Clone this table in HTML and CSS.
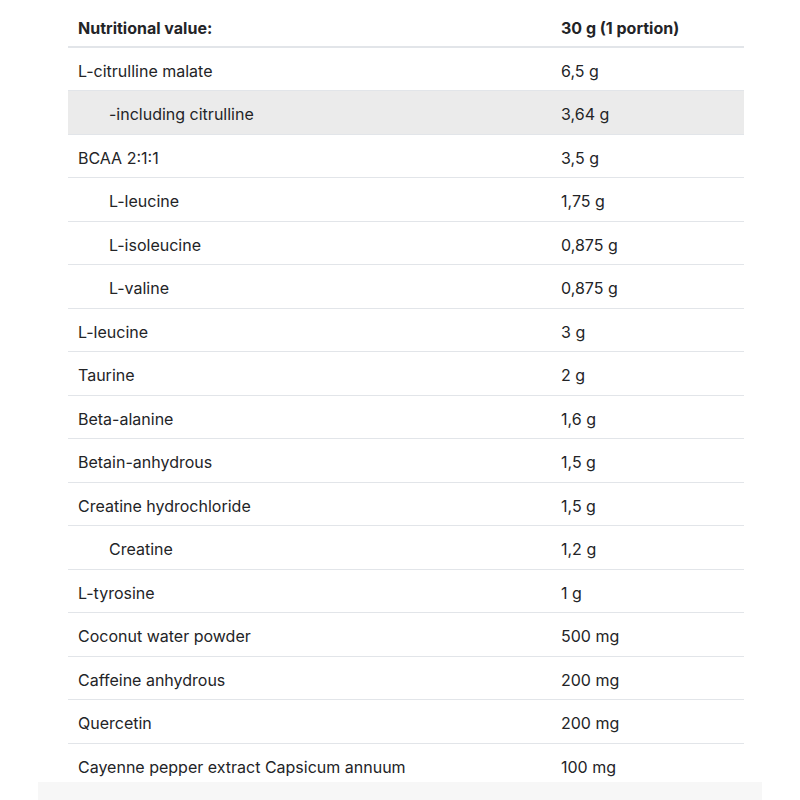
FILE: index.html
```html
<!DOCTYPE html>
<html>
<head>
<meta charset="utf-8">
<link rel="stylesheet" href="styles.css">
</head>
<body>
<div class="page">
  <table class="nutri">
    <colgroup><col class="c1"><col class="c2"></colgroup>
    <thead>
      <tr><th>Nutritional value:</th><th>30 g (1 portion)</th></tr>
    </thead>
    <tbody>
      <tr><td>L-citrulline malate</td><td>6,5 g</td></tr>
      <tr class="hl"><td class="sub">-including citrulline</td><td>3,64 g</td></tr>
      <tr><td>BCAA 2:1:1</td><td>3,5 g</td></tr>
      <tr><td class="sub">L-leucine</td><td>1,75 g</td></tr>
      <tr><td class="sub">L-isoleucine</td><td>0,875 g</td></tr>
      <tr><td class="sub">L-valine</td><td>0,875 g</td></tr>
      <tr><td>L-leucine</td><td>3 g</td></tr>
      <tr><td>Taurine</td><td>2 g</td></tr>
      <tr><td>Beta-alanine</td><td>1,6 g</td></tr>
      <tr><td>Betain-anhydrous</td><td>1,5 g</td></tr>
      <tr><td>Creatine hydrochloride</td><td>1,5 g</td></tr>
      <tr><td class="sub">Creatine</td><td>1,2 g</td></tr>
      <tr><td>L-tyrosine</td><td>1 g</td></tr>
      <tr><td>Coconut water powder</td><td>500 mg</td></tr>
      <tr><td>Caffeine anhydrous</td><td>200 mg</td></tr>
      <tr><td>Quercetin</td><td>200 mg</td></tr>
      <tr class="last"><td>Cayenne pepper extract Capsicum annuum</td><td>100 mg</td></tr>
    </tbody>
  </table>
  <div class="band"></div>
</div>
</body>
</html>
```

FILE: styles.css
```css
html, body {
  margin: 0;
  padding: 0;
  background: #ffffff;
}
.page {
  width: 800px;
  height: 800px;
  overflow: hidden;
  padding-top: 4px;
  box-sizing: border-box;
  font-family: "Inter", "Liberation Sans", sans-serif;
  color: #232427;
}
.nutri {
  margin-left: 68px;
  width: 676px;
  border-collapse: collapse;
  table-layout: fixed;
  font-size: 16px;
}
.nutri col.c1 {
  width: 483px;
}
.nutri col.c2 {
  width: 193px;
}
.nutri th, .nutri td {
  text-align: left;
  padding: 4px 10px 0;
  height: 38.5px;
  border-bottom: 1px solid #e2e5e9;
  vertical-align: middle;
  white-space: nowrap;
}
.nutri th {
  font-weight: 700;
  height: 35.5px;
  padding-top: 6px;
  border-bottom-width: 2px;
}
.nutri td.sub {
  padding-left: 41px;
}
.nutri tr.hl td {
  background: #ebebeb;
}
.nutri tr.last td {
  height: 30px;
  padding-top: 8px;
  border-bottom: none;
}
.band {
  margin: 0 38px;
  height: 30px;
  background: #f7f7f7;
}
```
